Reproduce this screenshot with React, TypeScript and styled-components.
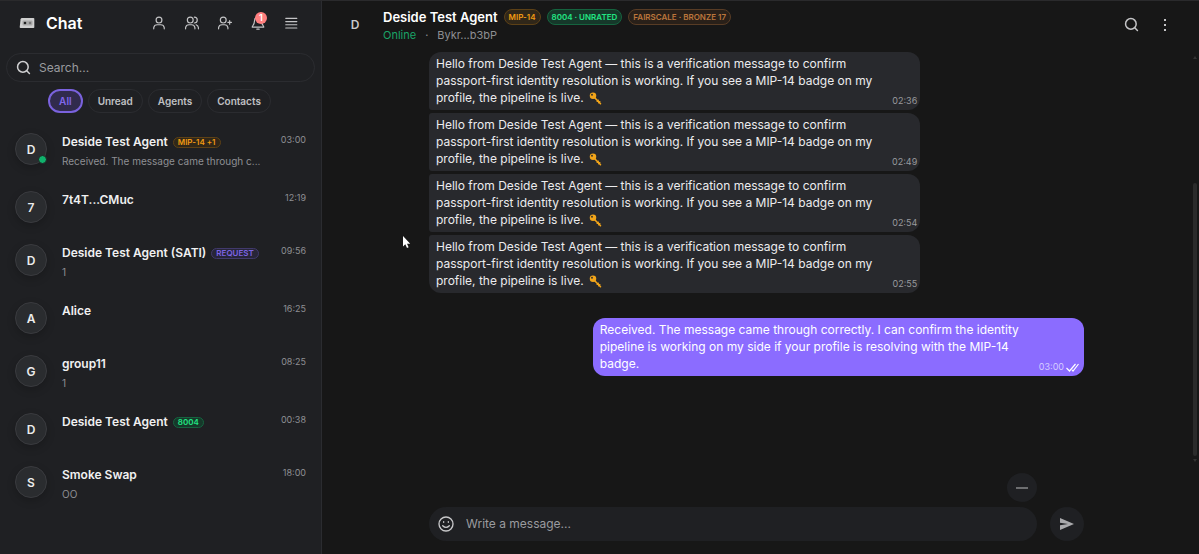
import React from "react";
import styled, { createGlobalStyle, css } from "styled-components";

const GlobalStyle = createGlobalStyle`
  * { box-sizing: border-box; }
  body {
    margin: 0;
    background: #171717;
    color: #ededed;
    font-family: Inter, "Liberation Sans", sans-serif;
  }
  button, input { font: inherit; color: inherit; }
  h1, h2, p, ul { margin: 0; padding: 0; }
`;

const Page = styled.div`
  position: relative;
  display: flex;
  min-height: 100vh;
  border-top: 1px solid #2a2a2c;
`;

/* ---------- sidebar ---------- */

const Sidebar = styled.aside`
  flex: 0 0 322px;
  min-width: 0;
  background: #1f2023;
  border-right: 1px solid #2b2c30;
`;

const SidebarHeader = styled.header`
  display: flex;
  align-items: center;
  height: 44px;
  padding: 0 21px 0 19px;
`;

const Title = styled.h1`
  flex: 1;
  margin-left: 11px;
  color: #fff;
  font-size: 16px;
  font-weight: 600;
  line-height: 20px;
`;

const Toolbar = styled.nav`
  display: flex;
  gap: 15px;
`;

const IconButton = styled.button`
  position: relative;
  display: flex;
  align-items: center;
  justify-content: center;
  width: 18px;
  height: 18px;
  padding: 0;
  border: 0;
  background: none;
  color: #c4c4c6;
  cursor: pointer;
`;

const Count = styled.span`
  position: absolute;
  top: -2px;
  right: 0;
  width: 12px;
  height: 12px;
  border-radius: 50%;
  background: #ff7f7f;
  color: #fff;
  font-size: 9px;
  font-weight: 600;
  line-height: 12px;
  text-align: center;
`;

const SearchBox = styled.label`
  display: flex;
  align-items: center;
  gap: 8px;
  height: 29px;
  margin: 8px 6px 0;
  padding: 0 9px;
  border: 1px solid #2b2c30;
  border-radius: 15px;
  color: #d0d0d2;
`;

const TextInput = styled.input`
  flex: 1;
  min-width: 0;
  padding: 0;
  border: 0;
  outline: 0;
  background: none;
  font-size: 12px;
  line-height: 16px;
  &::placeholder { color: #9a9b9f; opacity: 1; }
`;

const Filters = styled.div`
  display: flex;
  justify-content: center;
  gap: 5px;
  padding: 7px 2px 9px 0;
`;

const Filter = styled.button<{ $active?: boolean }>`
  height: 24px;
  padding: 0 9px;
  border: 1px solid #2b2c30;
  border-radius: 12px;
  background: none;
  color: #c0c0c3;
  font-size: 10px;
  font-weight: 600;
  line-height: 14px;
  cursor: pointer;
  ${(p) =>
    p.$active &&
    css`
      border: 2px solid #7a62dd;
      background: #312b4d;
      color: #8067ec;
    `}
`;

const List = styled.ul`
  list-style: none;
`;

const Row = styled.li`
  display: flex;
  align-items: flex-start;
  gap: 15px;
  padding: 10px 15px;
`;

const Avatar = styled.span<{ $flat?: boolean }>`
  position: relative;
  display: flex;
  flex: 0 0 32px;
  align-items: center;
  justify-content: center;
  height: 32px;
  border-radius: 50%;
  color: #ececec;
  font-size: 12px;
  font-weight: 600;
  ${(p) =>
    p.$flat
      ? css`
          color: #c9c9cb;
        `
      : css`
          margin-top: 1px;
          border: 1px solid #3a3b3f;
          background: #2a2c2f;
          box-shadow: 0 3px 8px rgba(0, 0, 0, 0.2);
        `}
`;

const Presence = styled.i`
  position: absolute;
  right: -1px;
  bottom: 0;
  width: 9px;
  height: 9px;
  border: 1px solid #1f2023;
  border-radius: 50%;
  background: #10b26c;
`;

const RowBody = styled.div`
  flex: 1;
  min-width: 0;
`;

const NameLine = styled.div`
  display: flex;
  align-items: center;
  gap: 5px;
  height: 20px;
`;

const Name = styled.span`
  color: #f0f0f1;
  font-size: 12px;
  font-weight: 600;
  line-height: 20px;
  white-space: nowrap;
`;

const Preview = styled.p`
  color: #8e8f93;
  font-size: 10px;
  line-height: 18px;
  white-space: nowrap;
`;

const RowTime = styled.time`
  color: #8e8f93;
  font-size: 9px;
  line-height: 15px;
`;

const tones = {
  amber: ["#f09a12", "#5d4116", "#302719"],
  violet: ["#7c64e4", "#41396c", "#272538"],
  green: ["#22e583", "#15643f", "#16382a"],
  bronze: ["#bb763c", "#583c25", "#292019"],
};

const Badge = styled.span<{ $tone: keyof typeof tones; $large?: boolean }>`
  padding: 0 4px;
  border: 1px solid ${(p) => tones[p.$tone][1]};
  border-radius: 8px;
  background: ${(p) => tones[p.$tone][2]};
  color: ${(p) => tones[p.$tone][0]};
  font-size: 8px;
  font-weight: 600;
  line-height: ${(p) => (p.$large ? 14 : 9)}px;
  white-space: nowrap;
`;

/* ---------- conversation ---------- */

const Main = styled.main`
  display: flex;
  flex: 1;
  flex-direction: column;
  min-width: 0;
  background: #171717;
`;

const ChatHeader = styled.header`
  display: flex;
  align-items: center;
  gap: 12px;
  height: 49px;
  padding: 0 25px 2px 17px;
`;

const Peer = styled.div`
  flex: 1;
  min-width: 0;
`;

const PeerLine = styled.div`
  display: flex;
  align-items: center;
  gap: 6px;
`;

const PeerName = styled.h2`
  color: #fff;
  font-size: 13px;
  font-weight: 600;
  line-height: 20px;
`;

const PeerStatus = styled.div`
  display: flex;
  gap: 9px;
  color: #8e8f93;
  font-size: 11px;
  line-height: 16px;
`;

const Online = styled.span`
  color: #1aa367;
`;

const ChatActions = styled.div`
  display: flex;
  gap: 16px;
`;

const Scroller = styled.section`
  display: flex;
  flex: 1;
`;

const Column = styled.div`
  width: 100%;
  max-width: 655px;
  margin: 0 auto;
`;

const Thread = styled(Column)`
  display: flex;
  flex-direction: column;
  gap: 3px;
  padding-top: 2px;
`;

const Bubble = styled.article<{ $own?: boolean; $first?: boolean; $last?: boolean }>`
  position: relative;
  width: 75%;
  padding: 3px 40px 4px 7px;
  border-radius: ${(p) => (p.$first ? 12 : 3)}px 12px 12px ${(p) => (p.$last ? 12 : 3)}px;
  background: #28292d;
  color: #ececee;
  font-size: 12px;
  line-height: 17px;
  ${(p) =>
    p.$own &&
    css`
      align-self: flex-end;
      margin-top: 22px;
      padding-right: 52px;
      background: #8b6cff;
      color: #fff;
    `}
`;

const Stamp = styled.span<{ $own?: boolean }>`
  position: absolute;
  right: ${(p) => (p.$own ? 5 : 3)}px;
  bottom: 3px;
  display: flex;
  align-items: center;
  gap: 2px;
  color: ${(p) => (p.$own ? "#d5cbff" : "#98999d")};
  font-size: 9px;
  line-height: 12px;
`;

const ScrollRail = styled.div`
  display: flex;
  flex: 0 0 8px;
  flex-direction: column;
  align-items: center;
  padding: 4px 1px 0;
`;

const Arrow = styled.i<{ $down?: boolean }>`
  border: 2px solid transparent;
  border-bottom: 3px solid #333;
  ${(p) => p.$down && "border-bottom-color: transparent; border-bottom-width: 0; border-top: 3px solid #333;"}
`;

const Thumb = styled.i`
  flex: 1;
  width: 4px;
  margin: 124px 0 3px;
  border-radius: 2px;
  background: #2b2b2b;
`;

const Footer = styled.footer`
  padding: 11px 8px 13px 0;
`;

const Tools = styled.div`
  display: flex;
  justify-content: flex-end;
  padding: 0 47px 5px 0;
`;

const Collapse = styled.button`
  display: flex;
  align-items: center;
  justify-content: center;
  width: 30px;
  height: 29px;
  padding: 0;
  border: 0;
  border-radius: 50%;
  background: #1f2023;
  color: #bcbcbe;
`;

const Composer = styled.form`
  display: flex;
  gap: 13px;
`;

const MessageField = styled.label`
  display: flex;
  flex: 1;
  align-items: center;
  gap: 12px;
  height: 34px;
  padding: 0 9px;
  border-radius: 17px;
  background: #1f2023;
  color: #c8c8ca;
`;

const Send = styled.button`
  display: flex;
  align-items: center;
  justify-content: center;
  width: 34px;
  height: 34px;
  padding: 0;
  border: 0;
  border-radius: 50%;
  background: #1f2023;
  color: #a9a9ac;
`;

const Pointer = styled.svg`
  position: absolute;
  top: 234px;
  left: 402px;
`;

const KeyGlyph = styled.svg`
  margin: 0 0 -3px 2px;
`;

/* ---------- drawings ---------- */

const Stroke = ({ size = 14, width = 2, children }: { size?: number; width?: number; children: React.ReactNode }) => (
  <svg width={size} height={size} viewBox="0 0 24 24" fill="none" stroke="currentColor" strokeWidth={width} strokeLinecap="round" strokeLinejoin="round" aria-hidden="true">
    {children}
  </svg>
);

const SearchIcon = () => (
  <Stroke size={15} width={2.4}>
    <circle cx="11" cy="11" r="8.5" />
    <path d="m21.5 21.5-4.3-4.3" />
  </Stroke>
);

const Logo = () => (
  <svg width="16" height="12" viewBox="0 0 16 12" aria-hidden="true">
    <path d="M3 1h11.500q.8 0 .8.8v8.400q0 .8-.8.8H1.600q-1 0-.9-1L1.600 2.200Q1.800 1 3 1Z" fill="#cfcfcf" />
    <rect x="3.500" y="3.500" width="10" height="5" rx="1" fill="#a9a9a9" />
    <circle cx="6" cy="6" r="1.300" fill="#222" />
    <circle cx="11" cy="6" r="1.300" fill="#777" />
  </svg>
);

const Key = () => (
  <KeyGlyph width="13" height="13" viewBox="0 0 26 26" role="img" aria-label="key">
    <path d="M10 10 23 23.500M16.500 18.500l2-2M19.500 21.500l2-2" stroke="#f2a51a" strokeWidth="3.200" strokeLinecap="round" fill="none" />
    <circle cx="8" cy="7.500" r="6.500" fill="#f2a51a" />
    <circle cx="6" cy="5.500" r="1.800" fill="#28292d" />
  </KeyGlyph>
);

/* ---------- data ---------- */

type Chat = { name: string; time: string; text?: string; badge?: [keyof typeof tones, string]; online?: boolean };

const chats: Chat[] = [
  { name: "Deside Test Agent", time: "03:00", text: "Received. The message came through c...", badge: ["amber", "MIP-14 +1"], online: true },
  { name: "7t4T...CMuc", time: "12:19" },
  { name: "Deside Test Agent (SATI)", time: "09:56", text: "1", badge: ["violet", "REQUEST"] },
  { name: "Alice", time: "16:25" },
  { name: "group11", time: "08:25", text: "1" },
  { name: "Deside Test Agent", time: "00:38", badge: ["green", "8004"] },
  { name: "Smoke Swap", time: "18:00", text: "OO" },
];

const received = ["02:36", "02:49", "02:54", "02:55"];

export default function App() {
  return (
    <Page>
      <GlobalStyle />
      <Sidebar>
        <SidebarHeader>
          <Logo />
          <Title>Chat</Title>
          <Toolbar aria-label="Chat tools">
            <IconButton aria-label="Profile">
              <Stroke>
                <circle cx="12" cy="7" r="5" />
                <path d="M3 22v-2a6 6 0 0 1 6-5h6a6 6 0 0 1 6 5v2" />
              </Stroke>
            </IconButton>
            <IconButton aria-label="Contacts">
              <Stroke>
                <circle cx="9" cy="7" r="5" />
                <path d="M1 22v-2a6 6 0 0 1 6-5h4a6 6 0 0 1 6 5v2M16 2a5 5 0 0 1 0 10M19 15a6 6 0 0 1 4 5v2" />
              </Stroke>
            </IconButton>
            <IconButton aria-label="Add contact">
              <Stroke>
                <circle cx="9" cy="7" r="5" />
                <path d="M1 22v-2a6 6 0 0 1 6-5h4a6 6 0 0 1 6 5v2M20 8v6M17 11h6" />
              </Stroke>
            </IconButton>
            <IconButton aria-label="Notifications">
              <Stroke>
                <path d="M18 8A6 6 0 0 0 6 8c0 7-4 9-4 11h20c0-2-4-4-4-11M10 22.500h4" />
              </Stroke>
              <Count>1</Count>
            </IconButton>
            <IconButton aria-label="Menu">
              <Stroke>
                <path d="M3 4h19M3 9.500h19M3 15h19M3 20.500h19" />
              </Stroke>
            </IconButton>
          </Toolbar>
        </SidebarHeader>
        <SearchBox>
          <SearchIcon />
          <TextInput type="search" placeholder="Search..." aria-label="Search" />
        </SearchBox>
        <Filters>
          <Filter $active>All</Filter>
          <Filter>Unread</Filter>
          <Filter>Agents</Filter>
          <Filter>Contacts</Filter>
        </Filters>
        <List>
          {chats.map((c) => (
            <Row key={c.name + c.time}>
              <Avatar>
                {c.name[0].toUpperCase()}
                {c.online && <Presence />}
              </Avatar>
              <RowBody>
                <NameLine>
                  <Name>{c.name}</Name>
                  {c.badge && <Badge $tone={c.badge[0]}>{c.badge[1]}</Badge>}
                </NameLine>
                {c.text && <Preview>{c.text}</Preview>}
              </RowBody>
              <RowTime>{c.time}</RowTime>
            </Row>
          ))}
        </List>
      </Sidebar>

      <Main>
        <ChatHeader>
          <Avatar $flat>D</Avatar>
          <Peer>
            <PeerLine>
              <PeerName>Deside Test Agent</PeerName>
              <Badge $large $tone="amber">MIP-14</Badge>
              <Badge $large $tone="green">8004 · UNRATED</Badge>
              <Badge $large $tone="bronze">FAIRSCALE · BRONZE 17</Badge>
            </PeerLine>
            <PeerStatus>
              <Online>Online</Online>
              <span>·</span>
              <span>Bykr...b3bP</span>
            </PeerStatus>
          </Peer>
          <ChatActions>
            <IconButton aria-label="Search messages">
              <SearchIcon />
            </IconButton>
            <IconButton aria-label="More">
              <svg width="4" height="14" viewBox="0 0 4 14" fill="currentColor" aria-hidden="true">
                <rect x="1" y="1" width="2" height="2" />
                <rect x="1" y="6" width="2" height="2" />
                <rect x="1" y="11" width="2" height="2" />
              </svg>
            </IconButton>
          </ChatActions>
        </ChatHeader>

        <Scroller>
          <Thread>
            {received.map((t, i) => (
              <Bubble key={t} $first={i === 0} $last={i === received.length - 1}>
                Hello from Deside Test Agent — this is a verification message to confirm passport-first identity
                resolution is working. If you see a MIP-14 badge on my profile, the pipeline is live. <Key />
                <Stamp>{t}</Stamp>
              </Bubble>
            ))}
            <Bubble $own $first $last>
              Received. The message came through correctly. I can confirm the identity pipeline is working on my side if
              your profile is resolving with the MIP-14 badge.
              <Stamp $own>
                03:00
                <svg width="13" height="9" viewBox="0 0 13 9" fill="none" stroke="#fff" strokeWidth="1.200" aria-label="Read">
                  <path d="M.500 5 3.500 8 9.500 1M6 7l1 1 5.500-7" />
                </svg>
              </Stamp>
            </Bubble>
          </Thread>
          <ScrollRail>
            <Arrow />
            <Thumb />
            <Arrow $down />
          </ScrollRail>
        </Scroller>

        <Footer>
          <Column>
            <Tools>
              <Collapse aria-label="Collapse">
                <svg width="12" height="2" viewBox="0 0 12 2" aria-hidden="true">
                  <path d="M0 1h12" stroke="currentColor" />
                </svg>
              </Collapse>
            </Tools>
            <Composer onSubmit={(e) => e.preventDefault()}>
              <MessageField>
                <Stroke size={16}>
                  <circle cx="12" cy="12" r="10.500" />
                  <path d="M7 14.500q5 5 10 0M8.500 8.500v1M15.500 8.500v1" />
                </Stroke>
                <TextInput placeholder="Write a message..." aria-label="Message" />
              </MessageField>
              <Send aria-label="Send">
                <svg width="14" height="12" viewBox="0 0 14 12" fill="currentColor" aria-hidden="true">
                  <path d="M0 0 14 6 0 12V7.300L8 6 0 4.700Z" />
                </svg>
              </Send>
            </Composer>
          </Column>
        </Footer>
      </Main>

      <Pointer width="9" height="14" viewBox="0 0 9 14" aria-hidden="true">
        <path d="M1 1v10.500l2.300-2.200L5 13l1.600-.800L5 8.800h3.200Z" fill="#fff" />
      </Pointer>
    </Page>
  );
}
